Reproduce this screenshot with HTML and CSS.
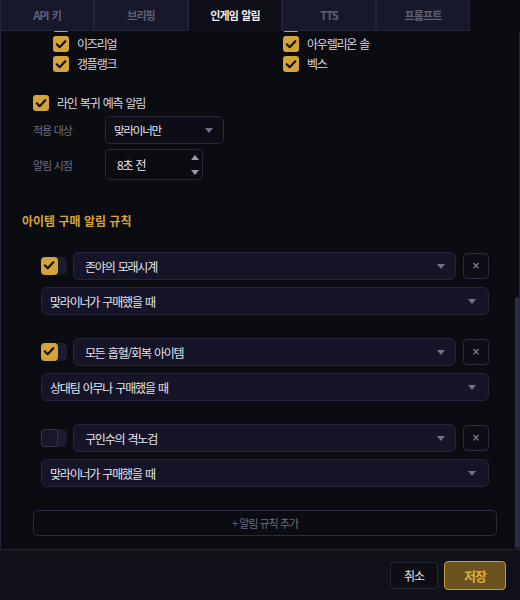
FILE: index.html
```html
<!DOCTYPE html>
<html lang="ko">
<head>
    <meta charset="UTF-8">
    <title>설정</title>
    <link rel="stylesheet" href="styles.css">
</head>
<body>
    <div class="tabs">
        <div class="tab">API 키</div>
        <div class="tab">브리핑</div>
        <div class="tab active">인게임 알림</div>
        <div class="tab">TTS</div>
        <div class="tab">프롬프트</div>
    </div>

    <div class="panel">
        <div class="panel-body" id="panel-body">
            <div class="content">

                <div class="section">
                    <h3 class="section-title">기본 알림</h3>
                    <div class="group">
                        <label class="check"><span class="cb"><svg viewBox="0 0 16 16"><path d="M3.8 8.3l2.9 2.9 5.6-6"/></svg></span>인게임 알림 사용</label>
                        <label class="check"><span class="cb"><svg viewBox="0 0 16 16"><path d="M3.8 8.3l2.9 2.9 5.6-6"/></svg></span>음성 알림(TTS) 사용</label>
                        <div class="field">
                            <span class="field-label">알림 볼륨</span>
                            <div class="select narrow">80%<span class="caret"></span></div>
                        </div>
                        <div class="field">
                            <span class="field-label">표시 위치</span>
                            <div class="select narrow">우측 상단<span class="caret"></span></div>
                        </div>
                    </div>
                </div>

                <div class="section">
                    <h3 class="section-title">오브젝트 알림</h3>
                    <div class="group">
                        <label class="check"><span class="cb"><svg viewBox="0 0 16 16"><path d="M3.8 8.3l2.9 2.9 5.6-6"/></svg></span>드래곤 생성 30초 전 알림</label>
                        <label class="check"><span class="cb"><svg viewBox="0 0 16 16"><path d="M3.8 8.3l2.9 2.9 5.6-6"/></svg></span>바론 생성 30초 전 알림</label>
                        <label class="check"><span class="cb off"></span>전령 생성 알림</label>
                    </div>
                </div>

                <div class="section">
                    <h3 class="section-title">라인 알림</h3>
                    <div class="group">
                        <label class="check"><span class="cb"><svg viewBox="0 0 16 16"><path d="M3.8 8.3l2.9 2.9 5.6-6"/></svg></span>상대 궁극기 준비 알림</label>
                        <div class="champ-grid">
                            <label class="check"><span class="cb"><svg viewBox="0 0 16 16"><path d="M3.8 8.3l2.9 2.9 5.6-6"/></svg></span>아리</label>
                            <label class="check"><span class="cb"><svg viewBox="0 0 16 16"><path d="M3.8 8.3l2.9 2.9 5.6-6"/></svg></span>카이사</label>
                            <label class="check"><span class="cb"><svg viewBox="0 0 16 16"><path d="M3.8 8.3l2.9 2.9 5.6-6"/></svg></span>제드</label>
                            <label class="check"><span class="cb"><svg viewBox="0 0 16 16"><path d="M3.8 8.3l2.9 2.9 5.6-6"/></svg></span>야스오</label>
                            <label class="check"><span class="cb"><svg viewBox="0 0 16 16"><path d="M3.8 8.3l2.9 2.9 5.6-6"/></svg></span>럭스</label>
                            <label class="check"><span class="cb"><svg viewBox="0 0 16 16"><path d="M3.8 8.3l2.9 2.9 5.6-6"/></svg></span>케인</label>
                            <label class="check"><span class="cb"><svg viewBox="0 0 16 16"><path d="M3.8 8.3l2.9 2.9 5.6-6"/></svg></span>리 신</label>
                            <label class="check"><span class="cb"><svg viewBox="0 0 16 16"><path d="M3.8 8.3l2.9 2.9 5.6-6"/></svg></span>요네</label>
                            <label class="check"><span class="cb"><svg viewBox="0 0 16 16"><path d="M3.8 8.3l2.9 2.9 5.6-6"/></svg></span>이즈리얼</label>
                            <label class="check"><span class="cb"><svg viewBox="0 0 16 16"><path d="M3.8 8.3l2.9 2.9 5.6-6"/></svg></span>아우렐리온 솔</label>
                            <label class="check"><span class="cb"><svg viewBox="0 0 16 16"><path d="M3.8 8.3l2.9 2.9 5.6-6"/></svg></span>갱플랭크</label>
                            <label class="check"><span class="cb"><svg viewBox="0 0 16 16"><path d="M3.8 8.3l2.9 2.9 5.6-6"/></svg></span>벡스</label>
                        </div>
                    </div>
                    <div class="group">
                        <label class="check"><span class="cb"><svg viewBox="0 0 16 16"><path d="M3.8 8.3l2.9 2.9 5.6-6"/></svg></span>라인 복귀 예측 알림</label>
                        <div class="field">
                            <span class="field-label">적용 대상</span>
                            <div class="select narrow">맞라이너만<span class="caret"></span></div>
                        </div>
                        <div class="field">
                            <span class="field-label">알림 시점</span>
                            <div class="number">8초 전
                                <span class="spin"><span class="up"></span><span class="down"></span></span>
                            </div>
                        </div>
                    </div>
                </div>

                <div class="section">
                    <h3 class="section-title">아이템 구매 알림 규칙</h3>
                    <div class="rules">
                        <div class="rule">
                            <div class="rule-head">
                                <span class="toggle"><span class="cb"><svg viewBox="0 0 16 16"><path d="M3.8 8.3l2.9 2.9 5.6-6"/></svg></span></span>
                                <div class="select">존야의 모래시계<span class="caret"></span></div>
                                <button class="remove">×</button>
                            </div>
                            <div class="select cond">맞라이너가 구매했을 때<span class="caret"></span></div>
                        </div>
                        <div class="rule">
                            <div class="rule-head">
                                <span class="toggle"><span class="cb"><svg viewBox="0 0 16 16"><path d="M3.8 8.3l2.9 2.9 5.6-6"/></svg></span></span>
                                <div class="select">모든 흡혈/회복 아이템<span class="caret"></span></div>
                                <button class="remove">×</button>
                            </div>
                            <div class="select cond">상대팀 아무나 구매했을 때<span class="caret"></span></div>
                        </div>
                        <div class="rule">
                            <div class="rule-head">
                                <span class="toggle"><span class="cb off"></span></span>
                                <div class="select">구인수의 격노검<span class="caret"></span></div>
                                <button class="remove">×</button>
                            </div>
                            <div class="select cond">맞라이너가 구매했을 때<span class="caret"></span></div>
                        </div>
                    </div>
                    <button class="add-rule">+ 알림 규칙 추가</button>
                </div>

            </div>
        </div>
        <div class="scroll-thumb"></div>
    </div>

    <div class="footer">
        <button class="btn">취소</button>
        <button class="btn primary">저장</button>
    </div>

    <script>
        // keep the list scrolled to the rules at the bottom
        const body = document.getElementById("panel-body");
        body.scrollTop = body.scrollHeight;
    </script>
</body>
</html>
```

FILE: styles.css
```css
body {
    margin: 0;
    width: 520px;
    height: 600px;
    overflow: hidden;
    display: flex;
    flex-direction: column;
    background-color: #0b0b12;
    color: #d8d8e0;
    font-family: "Noto Sans CJK KR", "Noto Sans", sans-serif;
    font-size: 12px;
    letter-spacing: -1.2px;
    word-spacing: 1px;
}

/* tabs */
.tabs {
    display: flex;
    height: 31px;
    flex: none;
}
.tab {
    width: 94px;
    box-sizing: border-box;
    display: flex;
    align-items: center;
    justify-content: center;
    background-color: #18182c;
    border: 1px solid #222238;
    border-top: none;
    color: #606076;
    font-size: 11px;
    font-weight: 700;
    letter-spacing: -0.9px;
}
.tab.active {
    background-color: #0e0e16;
    border-bottom-color: #0e0e16;
    color: #ececf2;
}

/* scroll panel */
.panel {
    position: relative;
    height: 519px;
    flex: none;
    box-sizing: border-box;
    border: 1px solid #25253d;
    border-top: none;
}
.panel-body {
    height: 518px;
    overflow: hidden;
}
.scroll-thumb {
    position: absolute;
    right: 0;
    top: 266px;
    width: 4px;
    height: 251px;
    border-radius: 2px;
    background-color: #2c2c48;
}
.content {
    padding: 16px 22px 13px 21px;
}

.section + .section {
    margin-top: 32px;
}
.section-title {
    margin: 0 0 22px;
    color: #d4a43a;
    font-size: 12px;
    font-weight: 700;
    line-height: 18px;
    letter-spacing: 0;
    word-spacing: 0;
}
.group {
    margin-left: 11px;
    display: flex;
    flex-direction: column;
    gap: 5px;
}
.group + .group {
    margin-top: 23px;
}

/* checkboxes */
.check {
    display: flex;
    align-items: center;
    gap: 8px;
    height: 16px;
    line-height: 16px;
    color: #d8d8e0;
}
.cb {
    width: 16px;
    height: 16px;
    flex: none;
    display: flex;
    border-radius: 3px;
    background-color: #d4a43a;
}
.cb svg {
    width: 16px;
    height: 16px;
    fill: none;
    stroke: #17120a;
    stroke-width: 2.2;
    stroke-linecap: round;
    stroke-linejoin: round;
}
.cb.off {
    background-color: #161626;
    box-shadow: inset 0 0 0 1px #33334d;
}
.champ-grid {
    margin-left: 20px;
    display: grid;
    grid-template-columns: 230px 1fr;
    row-gap: 4px;
}

/* form fields */
.field {
    display: flex;
    align-items: center;
}
.field-label {
    width: 72px;
    color: #6f6f80;
    font-size: 11px;
}
.select {
    height: 28px;
    box-sizing: border-box;
    display: flex;
    align-items: center;
    padding: 0 10px 0 8px;
    background-color: #0d0d16;
    border: 1px solid #282840;
    border-radius: 5px;
    color: #e4e4ea;
}
.select.narrow {
    width: 119px;
    font-size: 11.5px;
}
.caret {
    margin-left: auto;
    width: 0;
    height: 0;
    border-left: 4px solid transparent;
    border-right: 4px solid transparent;
    border-top: 5px solid #72728a;
}
.number {
    width: 98px;
    height: 31px;
    box-sizing: border-box;
    display: flex;
    align-items: center;
    padding: 0 3px 0 11px;
    border: 1px solid #282840;
    border-radius: 5px;
    color: #e8e8ee;
    font-size: 12px;
}
.spin {
    margin-left: auto;
    display: flex;
    flex-direction: column;
    gap: 10px;
}
.spin .up,
.spin .down {
    width: 0;
    height: 0;
    border-left: 4px solid transparent;
    border-right: 4px solid transparent;
}
.spin .up {
    border-bottom: 5px solid #9a9aaa;
}
.spin .down {
    border-top: 5px solid #9a9aaa;
}

/* purchase rules */
.rules {
    margin-left: 11px;
    display: flex;
    flex-direction: column;
    gap: 23px;
}
.rule {
    padding: 0 8px;
    display: flex;
    flex-direction: column;
    gap: 7px;
}
.rule-head {
    display: flex;
    align-items: center;
}
.toggle {
    width: 26px;
    height: 18px;
    flex: none;
    display: flex;
    margin-right: 6px;
    border-radius: 5px;
    background-color: #1b1b2f;
}
.toggle .cb {
    width: 17px;
    height: 18px;
    border-radius: 4px;
}
.rule .select {
    background-color: #151527;
    border-color: #24243b;
    border-radius: 6px;
    padding: 0 10px 0 11px;
}
.rule-head .select {
    flex: 1;
    margin-right: 7px;
}
.rule .select.cond {
    padding: 0 12px 0 8px;
}
.remove {
    width: 26px;
    height: 26px;
    flex: none;
    padding: 0 0 1px;
    box-sizing: border-box;
    background-color: #0d0d15;
    border: 1px solid #2a2a40;
    border-radius: 4px;
    color: #7c7c8e;
    font-family: "DejaVu Sans", sans-serif;
    font-size: 10px;
    font-weight: 700;
}
.add-rule {
    display: block;
    width: calc(100% - 11px);
    height: 26px;
    margin: 23px 0 0 11px;
    background: transparent;
    border: 1px solid #2a2a40;
    border-radius: 5px;
    color: #6c6c80;
    font-family: inherit;
    font-size: 11px;
    letter-spacing: -1px;
}

/* footer */
.footer {
    flex: 1;
    display: flex;
    align-items: center;
    justify-content: flex-end;
    gap: 6px;
    padding-right: 14px;
    background-color: #11111a;
}
.btn {
    height: 27px;
    padding: 0 13px;
    background-color: #0d0d14;
    border: 1px solid #262636;
    border-radius: 4px;
    color: #e2e2e8;
    font-family: inherit;
    font-size: 12px;
    letter-spacing: -1px;
}
.btn.primary {
    height: 29px;
    padding: 0 19px;
    background-color: #6b531f;
    border-color: #c69b36;
    color: #dcae3f;
    font-size: 13px;
    font-weight: 700;
}
```
